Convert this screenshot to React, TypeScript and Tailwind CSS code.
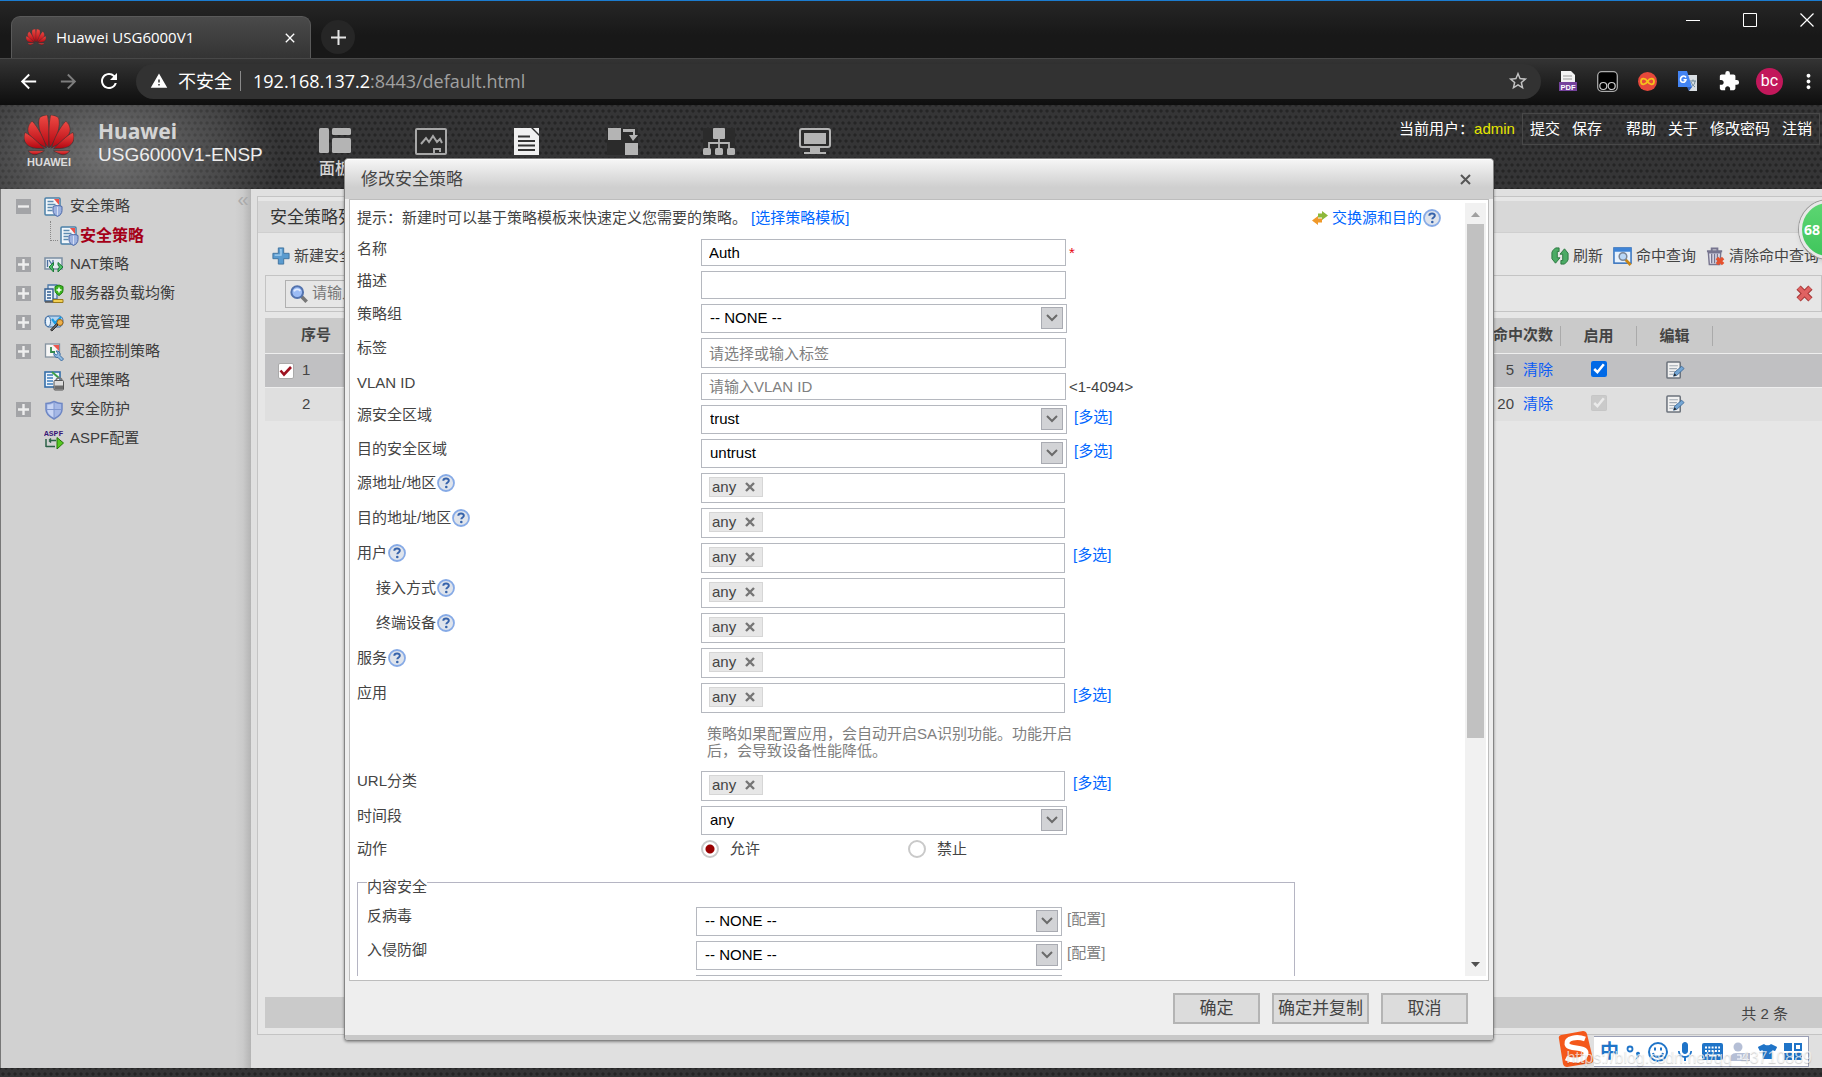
import { useState } from "react";
import type { ReactNode } from "react";
import clsx from "clsx";
import {
  MdArrowBack,
  MdArrowForward,
  MdClose,
  MdExtension,
  MdMic,
  MdMoreVert,
  MdRefresh,
  MdStarBorder,
  MdWarning,
} from "react-icons/md";
import { FaTshirt } from "react-icons/fa";

const DOTS =
  "bg-[#353536] bg-[radial-gradient(circle,#252525_0_1.2px,transparent_2px),radial-gradient(circle,#252525_0_1.2px,transparent_2px)] bg-size-[6px_12px] bg-position-[0_0,3px_6px]";

/* ---------- icons ---------- */

function HuaweiPetals({ className }: { className?: string }) {
  const half = (
    <g>
      <path d="M24 32C16 23 13 10 15 3C18 0 22 0 23 0C25 9 25 23 24 32Z" />
      <path d="M22 32C20 24 14 12 8 6C3 10 3 16 5 19C8 24 17 30 22 32Z" />
      <path d="M20 33C15 28 7 20 1 17C-1 22 0 27 4 30C8 33 15 33 20 33Z" />
      <path d="M20 35H4C7 39 11 40 14 38C17 37 19 36 20 35Z" />
    </g>
  );
  return (
    <svg viewBox="0 0 49 40" className={className}>
      <defs>
        <linearGradient id="petal" x1="0" y1="0" x2="0" y2="1">
          <stop offset="0" stopColor="#ee4a44" />
          <stop offset="1" stopColor="#b30510" />
        </linearGradient>
      </defs>
      <g fill="url(#petal)" stroke="#333" strokeWidth=".6">
        {half}
        <g transform="translate(49 0) scale(-1 1)">{half}</g>
      </g>
    </svg>
  );
}

function Svg({ size = 20, children }: { size?: number; children: ReactNode }) {
  return (
    <svg width={size} height={size} viewBox="0 0 20 20" className="shrink-0" fill="none">
      {children}
    </svg>
  );
}

const SHIELD = "M13.5 8.5c1.8 0 3.3.4 4.5 1v4c0 3-1.8 4.6-4.5 6c-2.7-1.4-4.5-3-4.5-6v-4c1.2-.6 2.7-1 4.5-1z";

const PolicyIcon = () => (
  <Svg>
    <rect x="1" y="1" width="15" height="17" rx="1" fill="#f2f7fb" stroke="#4b80a8" strokeWidth="1.5" />
    <path d="M10 2h5v6z" fill="#ee5148" />
    <path d="M3.5 4.5h6M3.5 7.5h8M3.5 10.5h5M3.5 13.5h5" stroke="#5d8bb0" strokeWidth="1.3" />
    <path d={SHIELD} fill="#9db2e0" stroke="#4d68a8" />
    <path d="M13.5 10v8" stroke="#d5def3" />
  </Svg>
);

const NatIcon = () => (
  <Svg>
    <rect x="1" y="3" width="17" height="11" fill="#e4eaf0" stroke="#7b8ea3" strokeWidth="1.5" />
    <path d="M3.5 5v7M5 5l4 6M9 5v3" stroke="#4b6fa0" strokeWidth="1.3" />
    <path d="M9.5 7.5L5 12l4.5 5v-3l-1.5-2l1.5-2zM14 7.5l5 4.5l-5 5v-3l1.5-2l-1.5-2z" fill="#4fc06c" stroke="#1c7b38" />
  </Svg>
);

const ServerIcon = () => (
  <Svg>
    <path d="M4 1h9v14H4z" fill="#dce7f2" stroke="#4a77a6" strokeWidth="1.3" />
    <path d="M1 5h8v12H1z" fill="#eef4fa" stroke="#325e91" strokeWidth="1.4" />
    <path d="M3 8h4M3 11h4M3 14h4" stroke="#325e91" strokeWidth="1.3" />
    <path d="M15 1l4 1.5v3.5c0 2.5-1.5 4-4 5.5c-2.5-1.5-4-3-4-5.5V2.5z" fill="#3db520" stroke="#1f7d10" />
    <path d="M15 3.5v5M12.500 6h5" stroke="#fff" strokeWidth="1.5" />
    <path d="M9 15.5h10v3H9z" fill="#f1ce53" stroke="#9a7b1c" />
    <path d="M1 18h8" stroke="#555" strokeWidth="1.5" />
  </Svg>
);

const BandwidthIcon = () => (
  <Svg>
    <path d="M4 3h12c2.5 1 3 3 3 5.5S18 13 16 14H4C1.5 13 1 11 1 8.5S1.5 4 4 3z" fill="#b3d4f0" stroke="#3f6ea3" />
    <ellipse cx="4" cy="8.5" rx="2.5" ry="5" fill="#eaf4fd" stroke="#3f6ea3" />
    <path d="M8 6l3 4l6-6" stroke="#1b9be0" strokeWidth="2.2" />
    <circle cx="16" cy="9.5" r="3" fill="#eeb04a" stroke="#9b6417" />
    <path d="M14 12l-6 6l-1.5-1l6-6.5z" fill="#666" stroke="#333" />
  </Svg>
);

const QuotaIcon = () => (
  <Svg>
    <rect x="1.5" y="2" width="14" height="13" fill="#f6f6f6" stroke="#8593a0" strokeWidth="1.3" />
    <path d="M9 3h6v6z" fill="#ed564d" />
    <path d="M7 5v5h4" stroke="#348a4c" strokeWidth="1.8" />
    <path d="M12 9a3.5 3.5 0 0 1 4 4.5l3.500 3.5l-2 2l-3.500-3.500a3.5 3.5 0 0 1-4-4.500l2.200 2l1.800-1.600z" fill="#8fb9e0" stroke="#3e6ea2" />
  </Svg>
);

const ProxyIcon = () => (
  <Svg>
    <rect x="1" y="1" width="15" height="15" fill="#eef5fc" stroke="#356fa9" strokeWidth="1.6" />
    <path d="M3 4h6M3 7h6M3 10h6M3 13h6" stroke="#3f7dbb" strokeWidth="1.5" />
    <path d="M8 1l7 6" stroke="#3c9f47" strokeWidth="2" />
    <path d="M12 10c0-4 6-4 6 0" stroke="#777" strokeWidth="1.5" />
    <rect x="10" y="9.5" width="9.5" height="9.5" rx="1" fill="#dcdcdc" stroke="#555" />
    <path d="M10.5 14.5h8.5v4h-8.5z" fill="#6d6d6d" />
  </Svg>
);

const ShieldIcon = () => (
  <Svg>
    <path d="M10 1.5c3 1.5 5.5 2 8 2v6c0 4.5-3 7-8 9.5c-5-2.5-8-5-8-9.5v-6c2.5 0 5-.5 8-2z" fill="#a5b8e6" stroke="#6e87c4" strokeWidth="1.5" />
    <path d="M10 3v14.5C6 15.5 3.5 13 3.5 9.5V5C6 5 8 4 10 3z" fill="#c8d5f4" />
    <path d="M10 3v15M3 9.5h14" stroke="#8097cf" />
  </Svg>
);

const AspfIcon = () => (
  <Svg>
    <text x="0" y="7" fontSize="8" fontWeight="700" fontFamily="Liberation Mono" fill="#3a1878">
      ASPF
    </text>
    <path d="M2 10v8M2 17.5h9M5 11.5h7M5 11.5l2-2M5 11.5l2 2" stroke="#2b6147" strokeWidth="1.5" />
    <path d="M13 8.5l6.5 5.5l-6.5 6z" fill="#55c820" stroke="#267309" />
  </Svg>
);

const HelpIcon = () => (
  <svg width="18" height="18" viewBox="0 0 18 18" className="ml-px shrink-0">
    <circle cx="9" cy="9" r="8" fill="#dfe4ec" stroke="#86aae6" strokeWidth="1.8" />
    <path d="M6.300 6.800c.2-3.200 5.600-3 5.5 0c0 1.700-2.5 1.700-2.5 3.5" fill="none" stroke="#3562aa" strokeWidth="2" />
    <circle cx="9.3" cy="13" r="1.3" fill="#3562aa" />
  </svg>
);

const PlusIcon = () => (
  <Svg size={18}>
    <path d="M7 1h6v6h6v6h-6v6H7v-6H1V7h6z" fill="#5a9bcf" stroke="#3d709d" />
    <path d="M9 3h1v6H3" stroke="#a5d0f0" strokeWidth="1.5" />
  </Svg>
);

const SearchIcon = () => (
  <Svg size={18}>
    <path d="M12.5 12.5l6 6" stroke="#777" strokeWidth="4" />
    <circle cx="8" cy="8" r="6.5" fill="#9cbcf5" stroke="#5373ae" strokeWidth="2.2" />
    <path d="M4.5 7c1-2.5 5-3 7-.5" stroke="#e0ebff" strokeWidth="2" />
  </Svg>
);

const ReloadIcon = () => (
  <Svg size={18}>
    <path
      d="M2 4l3-3h4v4H7v7h3l-5 6l-4-5V6zM18 16l-3 3h-4v-4h2V8h-3l5-6l4 5v7z"
      fill="#4bab65"
      stroke="#27733b"
    />
  </Svg>
);

const HitQueryIcon = () => (
  <Svg size={19}>
    <rect x="1" y="1" width="18" height="16" fill="#e8f2fd" stroke="#3572bd" strokeWidth="1.6" />
    <path d="M1 1h18v4H1z" fill="#3f84d6" />
    <path d="M13 13l5.5 6" stroke="#c98515" strokeWidth="3" />
    <circle cx="10.5" cy="10" r="4" fill="#b9d7f6" stroke="#7b8798" strokeWidth="1.6" />
  </Svg>
);

const TrashIcon = () => (
  <Svg size={19}>
    <path d="M1 4.5h16M6 4V1.5h6V4" stroke="#77758f" strokeWidth="2" />
    <path d="M2.5 6h13l-1 12.5h-11z" fill="#e3e2ee" stroke="#77758f" strokeWidth="1.5" />
    <path d="M6 7v10M9 7v10M12 7v10" stroke="#77758f" strokeWidth="1.5" />
    <path d="M11.5 11.5l6.5 6.5M18 11.5l-6.5 6.5" stroke="#e5512e" strokeWidth="3.6" />
  </Svg>
);

const RedCrossIcon = () => (
  <Svg size={17}>
    <path d="M3 3l14 14M17 3L3 17" stroke="#a83a3a" strokeWidth="7" />
    <path d="M3.5 3.5l13 13M16.5 3.5l-13 13" stroke="#e06262" strokeWidth="4.5" />
  </Svg>
);

const EditIcon = () => (
  <Svg size={19}>
    <rect x="1" y="1" width="14" height="17" rx="1" fill="#f1f1f1" stroke="#6c737c" strokeWidth="1.6" />
    <path d="M3.5 5h9M3.5 8h8M3.5 11h6M3.5 14h4" stroke="#a3abb3" strokeWidth="1.2" />
    <path d="M8 16l1-4l7.5-6.5l2.5 2.5l-7.5 7z" fill="#74a6d4" stroke="#416f9e" />
    <path d="M8 16l1-3l2 2z" fill="#222" />
  </Svg>
);

const SwapIcon = () => (
  <svg width="18" height="16" viewBox="0 0 18 16" className="shrink-0">
    <path d="M7 3.5h4V1l6 4.5L11 10V7.5H7z" fill="#8db83a" />
    <path d="M11 8.5H7V6L1 10.5L7 15v-2.5h4z" fill="#f0992a" />
  </svg>
);

/* ---------- browser frame ---------- */

function TabStrip() {
  return (
    <div className="flex h-[58px] items-end border-t border-[#1b7cd0] bg-linear-to-b from-[#262626] to-[#181818] to-60% pl-[11px]">
      <div className="flex h-[42px] w-[300px] items-center rounded-t-[9px] border border-b-0 border-[#5a5a5a] bg-linear-to-b from-[#4a4a4a] to-[#343434] pr-3 pl-3.5">
        <HuaweiPetals className="w-5" />
        <span className="ml-2.5 grow font-['Open_Sans',sans-serif] text-[15px] text-white">Huawei USG6000V1</span>
        <button aria-label="关闭标签页" className="text-white">
          <MdClose size={16} />
        </button>
      </div>
      <button
        aria-label="新标签页"
        className="mb-1 ml-2.5 flex size-[34px] items-center justify-center rounded-full bg-[#262626] text-white"
      >
        <svg width="15" height="15" viewBox="0 0 15 15">
          <path d="M7.5 0v15M0 7.5h15" stroke="#e5e5e5" strokeWidth="2" />
        </svg>
      </button>
      <div className="mb-[31px] ml-auto flex items-center gap-[43px] pr-2">
        <svg width="14" height="14" viewBox="0 0 14 14">
          <path d="M0 7.5h14" stroke="#fff" />
        </svg>
        <svg width="14" height="14" viewBox="0 0 14 14">
          <path d="M.5.5h13v13H.5z" stroke="#fff" fill="none" />
        </svg>
        <svg width="14" height="14" viewBox="0 0 14 14">
          <path d="M.5.5l13 13M13.5.5l-13 13" stroke="#fff" strokeWidth="1.2" />
        </svg>
      </div>
    </div>
  );
}

function AddressBar() {
  return (
    <div className="flex h-[47px] items-center border-t border-[#484848] bg-linear-to-b from-[#343434] to-[#0e0e0e] pr-0.5 pb-0.5 pl-[17px] text-white">
      <button aria-label="后退">
        <MdArrowBack size={23} />
      </button>
      <button aria-label="前进" className="ml-[17px] text-[#7d7d7d]">
        <MdArrowForward size={23} />
      </button>
      <button aria-label="刷新" className="ml-[17px]">
        <MdRefresh size={24} />
      </button>
      <div className="ml-[15px] flex h-[35px] grow items-center rounded-full bg-[#323232] pr-3 pl-[14px] font-['Open_Sans','Noto_Sans_CJK_SC',sans-serif] text-[18px]">
        <MdWarning size={18} />
        <span className="ml-[10px]">不安全</span>
        <span className="mx-2 h-5 w-px bg-[#8a8a8a]" />
        <span className="ml-1">192.168.137.2</span>
        <span className="text-[#a0a0a0]">:8443/default.html</span>
        <MdStarBorder size={22} className="ml-auto text-[#c4c4c4]" />
      </div>
      <div className="ml-[18px] flex items-center gap-5">
        <svg width="18" height="20" viewBox="0 0 18 20">
          <path d="M2 0h10l4 4v9H2z" fill="#f2f2f2" />
          <path d="M4 5h9M4 8h9" stroke="#999" />
          <path d="M0 11h18v9H0z" fill="#74429c" />
          <text x="1.5" y="18.5" fontSize="7.5" fontWeight="700" fontFamily="Liberation Sans" fill="#fff">PDF</text>
        </svg>
        <svg width="21" height="21" viewBox="0 0 21 21">
          <rect x=".7" y=".7" width="19.6" height="19.6" rx="4" fill="#000" stroke="#aaa" strokeWidth="1.3" />
          <circle cx="6.3" cy="15" r="3.5" fill="none" stroke="#ccc" strokeWidth="1.2" />
          <circle cx="14.7" cy="15" r="3.5" fill="none" stroke="#ccc" strokeWidth="1.2" />
        </svg>
        <svg width="19" height="19" viewBox="0 0 19 19">
          <circle cx="9.5" cy="9.5" r="9.5" fill="#e6483b" />
          <path d="M9.5 9.5C7 5.5 3 6 3 9.5S7 13.5 9.5 9.5S16 6 16 9.5S12 13.5 9.5 9.5z" fill="none" stroke="#f5c21c" strokeWidth="1.8" />
        </svg>
        <svg width="21" height="21" viewBox="0 0 21 21">
          <path d="M9 4h11v16H12z" fill="#d9dee3" />
          <path d="M13 10h6M16 8.5V10M14 16c2-1 4-3 4-6M14 11c1 2 2 3.5 4 5" stroke="#6d8797" fill="none" />
          <path d="M1 0h9l5 16H1z" fill="#4384f3" />
          <path d="M10 16h5l-3 4z" fill="#2f61c0" />
          <path d="M9 6.5C7.5 4 3.5 5 3.5 8.5S8 12.5 9 8.8H6.5" fill="none" stroke="#fff" strokeWidth="1.5" />
        </svg>
        <MdExtension size={22} />
        <span className="-ml-1 flex size-[27px] items-center justify-center rounded-full bg-[#c2185b] font-['Roboto',sans-serif] text-base">
          bc
        </span>
        <button aria-label="菜单" className="-ml-1.5">
          <MdMoreVert size={23} />
        </button>
      </div>
    </div>
  );
}

/* ---------- device console ---------- */

const NAV_ICONS: { name: string; art: ReactNode }[] = [
  {
    name: "面板",
    art: (
      <g fill="#b4b4b4">
        <rect x="0" y="0" width="10" height="25" rx="1.5" />
        <rect x="13" y="0" width="19" height="7" rx="1.5" />
        <rect x="13" y="10" width="19" height="15" rx="1.5" />
      </g>
    ),
  },
  {
    name: "监控",
    art: (
      <g fill="none" stroke="#a8a8a8" strokeWidth="2">
        <rect x="1" y="1" width="30" height="25" rx="1" fill="#2b2b2b" />
        <path d="M6 16l5-6l3 4l4-6l4 6l3-3l2 4" />
        <path d="M19 25v-4h6v3" />
      </g>
    ),
  },
  {
    name: "策略",
    art: (
      <g>
        <path d="M3 0h17l8 8v19H3z" fill="#f0f0f0" />
        <path d="M22 0h6v6z" fill="#f0f0f0" />
        <path d="M7 8.5h12M7 13h17M7 17.5h17M7 22h17" stroke="#333" strokeWidth="1.8" />
      </g>
    ),
  },
  {
    name: "对象",
    art: (
      <g fill="#b4b4b4">
        <rect x="0" y="0" width="31" height="27" fill="#2b2b2b" />
        <rect x="1" y="0" width="13" height="12" />
        <rect x="18" y="15" width="13" height="12" />
        <path d="M16 1h12v6h3l-5 6l-4-6h4V4H16z" />
      </g>
    ),
  },
  {
    name: "网络",
    art: (
      <g fill="#b4b4b4">
        <rect x="0" y="0" width="32" height="27" fill="#2b2b2b" />
        <rect x="10" y="0" width="12" height="11" rx="1" />
        <rect x="0" y="20" width="8" height="7" rx="1.5" />
        <rect x="12" y="20" width="8" height="7" rx="1.5" />
        <rect x="24" y="20" width="8" height="7" rx="1.5" />
        <path d="M16 10v10M6 20v-5h20v5" fill="none" stroke="#b4b4b4" strokeWidth="1.8" />
      </g>
    ),
  },
  {
    name: "系统",
    art: (
      <g fill="#b4b4b4">
        <rect x="1" y="1" width="30" height="18" rx="2" fill="#2b2b2b" stroke="#b4b4b4" strokeWidth="2" />
        <rect x="5" y="5" width="22" height="11" />
        <path d="M11 20h10v4h6v2H5v-2h6z" />
      </g>
    ),
  },
];

function DeviceHeader() {
  return (
    <header className={clsx("h-[84px] shrink-0", DOTS)}>
      <div className="flex h-full items-start bg-[radial-gradient(ellipse_170px_110px_at_110px_50px,#b0b0b080,transparent)] pt-px">
        <div className="ml-6 w-[50px] pt-[9px]">
          <HuaweiPetals className="w-full" />
          <div className="text-center text-[11px] leading-3 font-bold text-[#dcdcdc]">HUAWEI</div>
        </div>
        <div className="ml-6 w-[221px] pt-[13px]">
          <div className="font-['Noto_Sans',sans-serif] text-[21px] leading-6 font-bold text-[#d4d4d4]">Huawei</div>
          <div className="text-[19px] leading-6 text-[#ededed]">USG6000V1-ENSP</div>
        </div>
        <nav className="flex gap-16 pt-[22px]">
          {NAV_ICONS.map((item) => (
            <a key={item.name} href="#" className="w-8 text-base whitespace-nowrap text-[#d6d6d6]">
              <svg width="32" height="28" viewBox="0 0 32 28">
                {item.art}
              </svg>
              <span className="block leading-[26px] font-medium">{item.name}</span>
            </a>
          ))}
        </nav>
        <div className="mt-[7px] mr-0.5 ml-auto flex h-8 items-center text-white">
          <span>当前用户：</span>
          <span className="mr-[7px] text-[#e6e600]">admin</span>
          <div className="flex h-full items-center gap-3 border border-[#484848] px-[7px]">
            <a href="#">提交</a>
            <a href="#" className="mr-3">保存</a>
            <a href="#">帮助</a>
            <a href="#">关于</a>
            <a href="#">修改密码</a>
            <a href="#">注销</a>
          </div>
        </div>
      </div>
    </header>
  );
}

const TREE: { label: string; icon: ReactNode; toggle?: "plus" | "minus"; child?: boolean }[] = [
  { label: "安全策略", icon: <PolicyIcon />, toggle: "minus" },
  { label: "安全策略", icon: <PolicyIcon />, child: true },
  { label: "NAT策略", icon: <NatIcon />, toggle: "plus" },
  { label: "服务器负载均衡", icon: <ServerIcon />, toggle: "plus" },
  { label: "带宽管理", icon: <BandwidthIcon />, toggle: "plus" },
  { label: "配额控制策略", icon: <QuotaIcon />, toggle: "plus" },
  { label: "代理策略", icon: <ProxyIcon /> },
  { label: "安全防护", icon: <ShieldIcon />, toggle: "plus" },
  { label: "ASPF配置", icon: <AspfIcon /> },
];

function Sidebar() {
  return (
    <aside className="relative w-[251px] shrink-0 border-l border-[#777] bg-[linear-gradient(to_left,#b4b4b4,#cacaca_8px,#d1d1d1_16px)] pt-[3px]">
      <button aria-label="收起" className="absolute top-0 right-0 h-5 w-4 text-xl leading-4 text-[#aaa]">
        «
      </button>
      <ul>
        {TREE.map((item, i) => (
          <li key={i} className="flex h-[29px] items-center pl-[15px]">
            {item.child ? (
              <span className="mr-0.5 mb-2.5 ml-[34px] h-5 w-2 border-b border-l border-dotted border-[#888]" />
            ) : (
              <span className="mr-[13px] flex size-[15px] shrink-0 items-center justify-center">
                {item.toggle && (
                  <button
                    aria-label={item.label}
                    className="flex size-[15px] items-center justify-center bg-[#a3a4a7]"
                  >
                    <svg width="11" height="11" viewBox="0 0 11 11">
                      <path d={item.toggle === "plus" ? "M0 5.5h11M5.5 0v11" : "M0 5.5h11"} stroke="#eee" strokeWidth="2.4" />
                    </svg>
                  </button>
                )}
              </span>
            )}
            {item.icon}
            <a href="#" className={clsx(item.child ? "text-base font-bold text-[#a50018]" : "ml-1.5 text-[#3d3d3d]")}>
              {item.label}
            </a>
          </li>
        ))}
      </ul>
    </aside>
  );
}

const ROWS = [
  { id: 1, hits: 5, selected: true },
  { id: 2, hits: 20, selected: false },
];

function PolicyList() {
  return (
    <main className="min-w-0 grow bg-[#e0e0e0] pt-[7px] pb-[33px] pl-1.5">
      <section className="flex h-full flex-col border border-r-0 border-[#c4c4c4] bg-[#e6e6e6] pb-1.5">
        <h1 className="mt-1 flex h-8 shrink-0 items-center border-b border-[#cfcfcf] bg-[#d8d8d8] pt-[3px] pl-3 text-[17px] text-[#333]">
          安全策略列表
        </h1>
        <div className="flex h-[42px] shrink-0 items-center pt-1 pr-[3px] pl-[14px]">
          <button className="flex items-center gap-1">
            <PlusIcon />
            新建安全策略
          </button>
          <div className="ml-auto flex gap-2.5">
            <button className="flex items-center gap-1">
              <ReloadIcon />
              刷新
            </button>
            <button className="flex items-center gap-1">
              <HitQueryIcon />
              命中查询
            </button>
            <button className="flex items-center gap-1">
              <TrashIcon />
              清除命中查询
            </button>
          </div>
        </div>
        <div className="ml-[7px] flex h-[37px] shrink-0 items-center border border-[#c4c4c4] pr-2 pl-[19px]">
          <label className="flex h-7 w-[300px] items-center gap-1 border border-[#b0b0b0] pl-1">
            <SearchIcon />
            <input aria-label="查询" placeholder="请输入要查询的内容" className="min-w-0 grow bg-transparent placeholder:text-[#777]" />
          </label>
          <button aria-label="清空" className="ml-auto">
            <RedCrossIcon />
          </button>
        </div>
        <table className="mt-1.5 ml-[7px] table-fixed border-separate border-spacing-0 text-left">
          <colgroup>
            <col className="w-[34px]" />
            <col className="w-[80px]" />
            <col />
            <col className="w-[92px]" />
            <col className="w-[77px]" />
            <col className="w-[76px]" />
            <col className="w-[109px]" />
          </colgroup>
          <thead className="bg-[#cacaca]">
            <tr className="h-[35px]">
              <th />
              <th className="pl-0.5">序号</th>
              <th />
              <th className="pr-[7px] text-right">
                <span className="whitespace-nowrap">命中次数</span>
              </th>
              <th className="p-0">
                <div className="border-x border-[#aaa] text-center leading-5">启用</div>
              </th>
              <th className="p-0">
                <div className="border-r border-[#aaa] text-center leading-5">编辑</div>
              </th>
              <th />
            </tr>
          </thead>
          <tbody>
            {ROWS.map((row) => (
              <tr key={row.id} className={clsx("h-[34px]", row.selected ? "bg-[#c0c0c2]" : "bg-[#dfdfdf]")}>
                <td className="border-t border-[#eee] p-0">
                  {row.selected && (
                    <label className="ml-[13px] flex size-4 items-center justify-center rounded-xs border border-[#aaa] bg-white">
                      <input type="checkbox" defaultChecked aria-label="选择" className="absolute appearance-none" />
                      <svg width="14" height="12" viewBox="0 0 14 12">
                        <path d="M1.5 5.5l3.5 4L12 2" fill="none" stroke="#9d1220" strokeWidth="2.6" />
                      </svg>
                    </label>
                  )}
                </td>
                <td className="border-t border-[#eee] pl-[3px]">{row.id}</td>
                <td className="border-t border-[#eee]" />
                <td className="border-t border-[#eee] pr-[7px] text-right">
                  {row.hits}
                  <a href="#" className="ml-[9px] text-[#0a5cf5]">清除</a>
                </td>
                <td className="border-t border-[#eee] p-0 pb-1">
                  <input
                    type="checkbox"
                    aria-label="启用"
                    defaultChecked
                    disabled={!row.selected}
                    className="mx-auto block size-4 accent-[#0069e6]"
                  />
                </td>
                <td className="border-t border-[#eee] p-0">
                  <button aria-label="编辑" className="mx-auto block">
                    <EditIcon />
                  </button>
                </td>
                <td className="border-t border-[#eee]" />
              </tr>
            ))}
          </tbody>
        </table>
        <div className="mt-auto ml-[7px] flex h-[31px] shrink-0 items-center justify-end bg-[#cacaca] pt-[3px] pr-[34px]">共 2 条</div>
      </section>
    </main>
  );
}

/* ---------- dialog ---------- */

type Field = {
  id: string;
  label: string;
  kind: "text" | "select" | "chips";
  height: "h-[27px]" | "h-[28px]" | "h-[29px]" | "h-[30px]";
  value?: string;
  placeholder?: string;
  help?: boolean;
  indent?: boolean;
  multi?: boolean;
  after?: ReactNode;
};

const FIELDS: Field[] = [
  { id: "name", label: "名称", kind: "text", height: "h-[27px]", value: "Auth", after: <span className="ml-[3px] text-red-600">*</span> },
  { id: "desc", label: "描述", kind: "text", height: "h-[28px]" },
  { id: "group", label: "策略组", kind: "select", height: "h-[29px]", value: "-- NONE --" },
  { id: "tag", label: "标签", kind: "text", height: "h-[30px]", placeholder: "请选择或输入标签" },
  { id: "vlan", label: "VLAN ID", kind: "text", height: "h-[27px]", placeholder: "请输入VLAN ID", after: <span className="ml-[3px]">&lt;1-4094&gt;</span> },
  { id: "src-zone", label: "源安全区域", kind: "select", height: "h-[29px]", value: "trust", multi: true },
  { id: "dst-zone", label: "目的安全区域", kind: "select", height: "h-[29px]", value: "untrust", multi: true },
  { id: "src-addr", label: "源地址/地区", kind: "chips", height: "h-[30px]", help: true },
  { id: "dst-addr", label: "目的地址/地区", kind: "chips", height: "h-[30px]", help: true },
  { id: "user", label: "用户", kind: "chips", height: "h-[30px]", help: true, multi: true },
  { id: "access", label: "接入方式", kind: "chips", height: "h-[30px]", help: true, indent: true },
  { id: "terminal", label: "终端设备", kind: "chips", height: "h-[30px]", help: true, indent: true },
  { id: "service", label: "服务", kind: "chips", height: "h-[30px]", help: true },
  { id: "app", label: "应用", kind: "chips", height: "h-[30px]", multi: true },
];

const FIELDS_AFTER_NOTE: Field[] = [
  { id: "url", label: "URL分类", kind: "chips", height: "h-[30px]", multi: true },
  { id: "time", label: "时间段", kind: "select", height: "h-[29px]", value: "any" },
];

function SelectBox({ id, value }: { id: string; value: string }) {
  return (
    <div className="relative h-[29px] w-[366px]">
      <select id={id} defaultValue={value} className="size-full appearance-none border border-[#b5b8bf] bg-white px-2 text-black">
        <option>{value}</option>
      </select>
      <span className="pointer-events-none absolute top-[3px] right-1 flex size-[22px] items-center justify-center border border-[#a9abb2] bg-[#d2d3d6]">
        <svg width="12" height="8" viewBox="0 0 12 8">
          <path d="M1 1l5 5l5-5" fill="none" stroke="#6b6b6b" strokeWidth="2" />
        </svg>
      </span>
    </div>
  );
}

function ChipBox({ id }: { id: string }) {
  return (
    <div className="flex h-full w-[364px] items-start border border-[#b5b8bf] pt-[3px] pl-[7px]">
      <span className="flex h-5 w-[54px] shrink-0 items-center border border-[#d6d6d6] bg-[#e7e7e7] pl-0.5">
        any
        <button aria-label="删除" className="ml-[9px]">
          <svg width="10" height="10" viewBox="0 0 10 10">
            <path d="M1 1l8 8M9 1L1 9" stroke="#757575" strokeWidth="2.4" />
          </svg>
        </button>
      </span>
      <input id={id} className="min-w-0 grow outline-none" />
    </div>
  );
}

function FieldRow({ field }: { field: Field }) {
  return (
    <div className={clsx("flex", field.height)}>
      <div className={clsx("flex h-5 w-[344px] shrink-0 items-center", field.indent && "pl-[19px]")}>
        <label htmlFor={field.id}>{field.label}</label>
        {field.help && <HelpIcon />}
      </div>
      {field.kind === "select" && <SelectBox id={field.id} value={field.value ?? ""} />}
      {field.kind === "text" && (
        <input
          id={field.id}
          defaultValue={field.value}
          placeholder={field.placeholder}
          className="w-[365px] border border-[#b5b8bf] px-[7px] pt-0.5 text-black placeholder:text-[#808080]"
        />
      )}
      {field.kind === "chips" && (
        <div className="w-[365px]">
          <ChipBox id={field.id} />
        </div>
      )}
      {field.multi && (
        <a href="#" className="mt-[3px] ml-[7px] leading-[18px] text-[#0066ff]">
          [多选]
        </a>
      )}
      {field.after && <div className="self-center pt-0.5">{field.after}</div>}
    </div>
  );
}

const ACTIONS = ["允许", "禁止"];
const CONTENT_SECURITY = [
  { id: "av", label: "反病毒" },
  { id: "ips", label: "入侵防御" },
  { id: "url-filter", label: "URL过滤" },
];

function PolicyDialog() {
  const [action, setAction] = useState("允许");

  return (
    <div
      role="dialog"
      aria-label="修改安全策略"
      className="absolute top-[53px] right-[328px] bottom-9 left-[344px] flex flex-col rounded-[4px] border border-[#858585] bg-[#eee] px-1 shadow-[0_1px_3px_#0006]"
    >
      <div className="-mx-1 flex h-10 shrink-0 items-center justify-between rounded-t-[4px] border-t border-white bg-linear-to-b from-[#f5f5f5] to-[#cfcfcf] to-70% pr-[22px] pl-4">
        <h2 className="text-[17px] text-[#444]">修改安全策略</h2>
        <button aria-label="关闭">
          <svg width="11" height="11" viewBox="0 0 11 11">
            <path d="M1 1l9 9M10 1l-9 9" stroke="#555" strokeWidth="2" />
          </svg>
        </button>
      </div>

      <div className="flex min-h-0 grow border border-[#bdbdbd] bg-white pt-[3px] pr-0.5 pb-1">
        <form className="min-w-0 grow overflow-hidden pt-[5px] pl-[7px]">
          <div className="mb-[11px] flex items-center pr-6 leading-5">
            <span>提示：新建时可以基于策略模板来快速定义您需要的策略。</span>
            <a href="#" className="ml-1 text-[#0066ff]">[选择策略模板]</a>
            <a href="#" className="ml-auto flex items-center gap-[3px] text-[#0066ff]">
              <SwapIcon />
              交换源和目的
            </a>
            <HelpIcon />
          </div>
          <div className="flex flex-col gap-[5px]">
            {FIELDS.map((field) => (
              <FieldRow key={field.id} field={field} />
            ))}
            <p className="ml-[350px] w-[370px] py-[7px] leading-[17px] text-[#808080]">
              策略如果配置应用，会自动开启SA识别功能。功能开启后，会导致设备性能降低。
            </p>
            {FIELDS_AFTER_NOTE.map((field) => (
              <FieldRow key={field.id} field={field} />
            ))}
            <div className="flex leading-[18px]">
              <span className="w-[344px]">动作</span>
              {ACTIONS.map((name) => (
                <label key={name} className="flex w-[207px] gap-[11px]">
                  <input
                    type="radio"
                    name="action"
                    checked={action === name}
                    onChange={() => setAction(name)}
                    className="size-[18px] appearance-none rounded-full border-2 border-[#c9c9c9] bg-white checked:bg-[radial-gradient(circle,#990000_0_4px,white_5px)]"
                  />
                  {name}
                </label>
              ))}
            </div>
          </div>

          {/* Content security */}
          <fieldset className="mt-[13px] w-[938px] border border-[#b5b5c3] pb-10 pl-[9px]">
            <legend className="pt-2 leading-[15px]">内容安全</legend>
            <div className="flex flex-col gap-[5px] pt-[13px]">
              {CONTENT_SECURITY.map((item) => (
                <div key={item.id} className="flex">
                  <label htmlFor={item.id} className="w-[329px] leading-[18px]">
                    {item.label}
                  </label>
                  <SelectBox id={item.id} value="-- NONE --" />
                  <a href="#" className="mt-[3px] ml-[5px] leading-[18px] text-[#808080]">
                    [配置]
                  </a>
                </div>
              ))}
            </div>
          </fieldset>
        </form>

        <div className="flex w-[21px] shrink-0 flex-col items-center bg-[#f1f1f1] px-0.5">
          <svg width="17" height="21" viewBox="0 0 17 21" className="shrink-0">
            <path d="M4 14l4.5-5l4.5 5z" fill="#a0a0a0" />
          </svg>
          <div className="w-full grow-[514] bg-[#c1c1c1]" />
          <div className="grow-[217]" />
          <svg width="17" height="21" viewBox="0 0 17 21" className="shrink-0">
            <path d="M4 7l4.5 5l4.5-5z" fill="#505050" />
          </svg>
        </div>
      </div>

      <div className="-mx-1 flex h-[59px] shrink-0 justify-end gap-3 rounded-b-[3px] border-b-[5px] border-[#c8c8c8] pt-3 pr-[25px] text-[17px]">
        <button className="h-[31px] w-[87px] border-2 border-[#b4b4b4] bg-[#dcdcdc] leading-6">确定</button>
        <button className="h-[31px] w-[97px] border-2 border-[#b4b4b4] bg-[#dcdcdc] leading-6 whitespace-nowrap">确定并复制</button>
        <button className="h-[31px] w-[87px] border-2 border-[#b4b4b4] bg-[#dcdcdc] leading-6">取消</button>
      </div>
    </div>
  );
}

/* ---------- desktop overlays ---------- */

function InputMethodBar() {
  return (
    <div className="absolute right-[13px] bottom-2.5 flex items-end">
      <svg width="36" height="36" viewBox="0 0 36 36">
        <path d="M1 8Q0 5 3 4L25 0Q28 0 29 3L35 28Q36 31 33 32L9 36Q6 36 5 33Z" fill="#f4581b" />
        <path d="M27 8C19 5 8 7 9 13C10 19 28 15 28 22C28 29 16 31 8 27" fill="none" stroke="#fff" strokeWidth="5" />
      </svg>
      <div className="flex h-[31px] items-center gap-[7px] border border-l-0 border-[#9a9fb5] bg-white px-1.5 text-[#1f74c8]">
        <span className="text-[19px] leading-5 font-bold">中</span>
        <svg width="15" height="18" viewBox="0 0 15 18">
          <circle cx="4" cy="6" r="2.5" fill="none" stroke="currentColor" strokeWidth="1.8" />
          <path d="M10 10.5a2 2 0 1 1 3 2q-.5 3-4 4q2-1.5 2-3z" fill="currentColor" />
        </svg>
        <svg width="20" height="20" viewBox="0 0 20 20" fill="none" stroke="currentColor" strokeWidth="2">
          <circle cx="10" cy="10" r="9" />
          <path d="M7 5.5v3M13 5.5v3M5 11c1 5 9 5 10 0" />
        </svg>
        <MdMic size={24} className="-mx-0.5" />
        <svg width="21" height="17" viewBox="0 0 21 17">
          <rect x="0" y="0" width="21" height="17" rx="2" fill="currentColor" />
          <path d="M3 4.500h15M3 8h15" stroke="#fff" strokeWidth="2" strokeDasharray="2 1.300" />
          <path d="M3 12.500h2M7 12.500h7M16 12.500h2" stroke="#fff" strokeWidth="2" />
        </svg>
        <svg width="21" height="20" viewBox="0 0 21 20" fill="#b5bfd6">
          <circle cx="8" cy="5" r="4.5" />
          <path d="M0 18q0-7 6-7h14v8H0z" />
          <path d="M7 13h4v4H7M13 13h5M13 15h4M13 17h5" fill="none" stroke="#fff" strokeWidth="1.2" />
        </svg>
        <FaTshirt size={19} />
        <svg width="18" height="19" viewBox="0 0 18 19" fill="currentColor">
          <path d="M0 1h8v8H0zM0 11h8v7H0zM10 11h8v7h-8z" />
          <path d="M11 2h6v6h-6z" fill="none" stroke="currentColor" strokeWidth="2" />
        </svg>
      </div>
    </div>
  );
}

export default function App() {
  return (
    <div className="flex h-screen min-h-[700px] flex-col overflow-hidden font-['Liberation_Sans','Noto_Sans_CJK_SC',sans-serif] text-[15px] text-[#444]">
      <TabStrip />
      <AddressBar />
      <div className="relative flex min-h-0 grow flex-col overflow-hidden">
        <DeviceHeader />
        <div className="flex min-h-0 grow">
          <Sidebar />
          <PolicyList />
        </div>
        <div className={clsx("h-[9px] shrink-0", DOTS)} />
        <div className="absolute top-[95px] -right-9 flex size-[59px] items-center rounded-full border-3 border-[#e8e8e8] bg-linear-to-b from-[#5cd672] to-[#3fc55c] pl-0.5 font-['Noto_Sans',sans-serif] text-sm font-bold text-white shadow-md ring-1 ring-[#999]">
          68
        </div>
        <PolicyDialog />
        <InputMethodBar />
        <span className="absolute right-2.5 bottom-[7px] text-base text-white/70 text-shadow-xs">
          https://blog.csdn.net/qq_43710889
        </span>
      </div>
    </div>
  );
}
